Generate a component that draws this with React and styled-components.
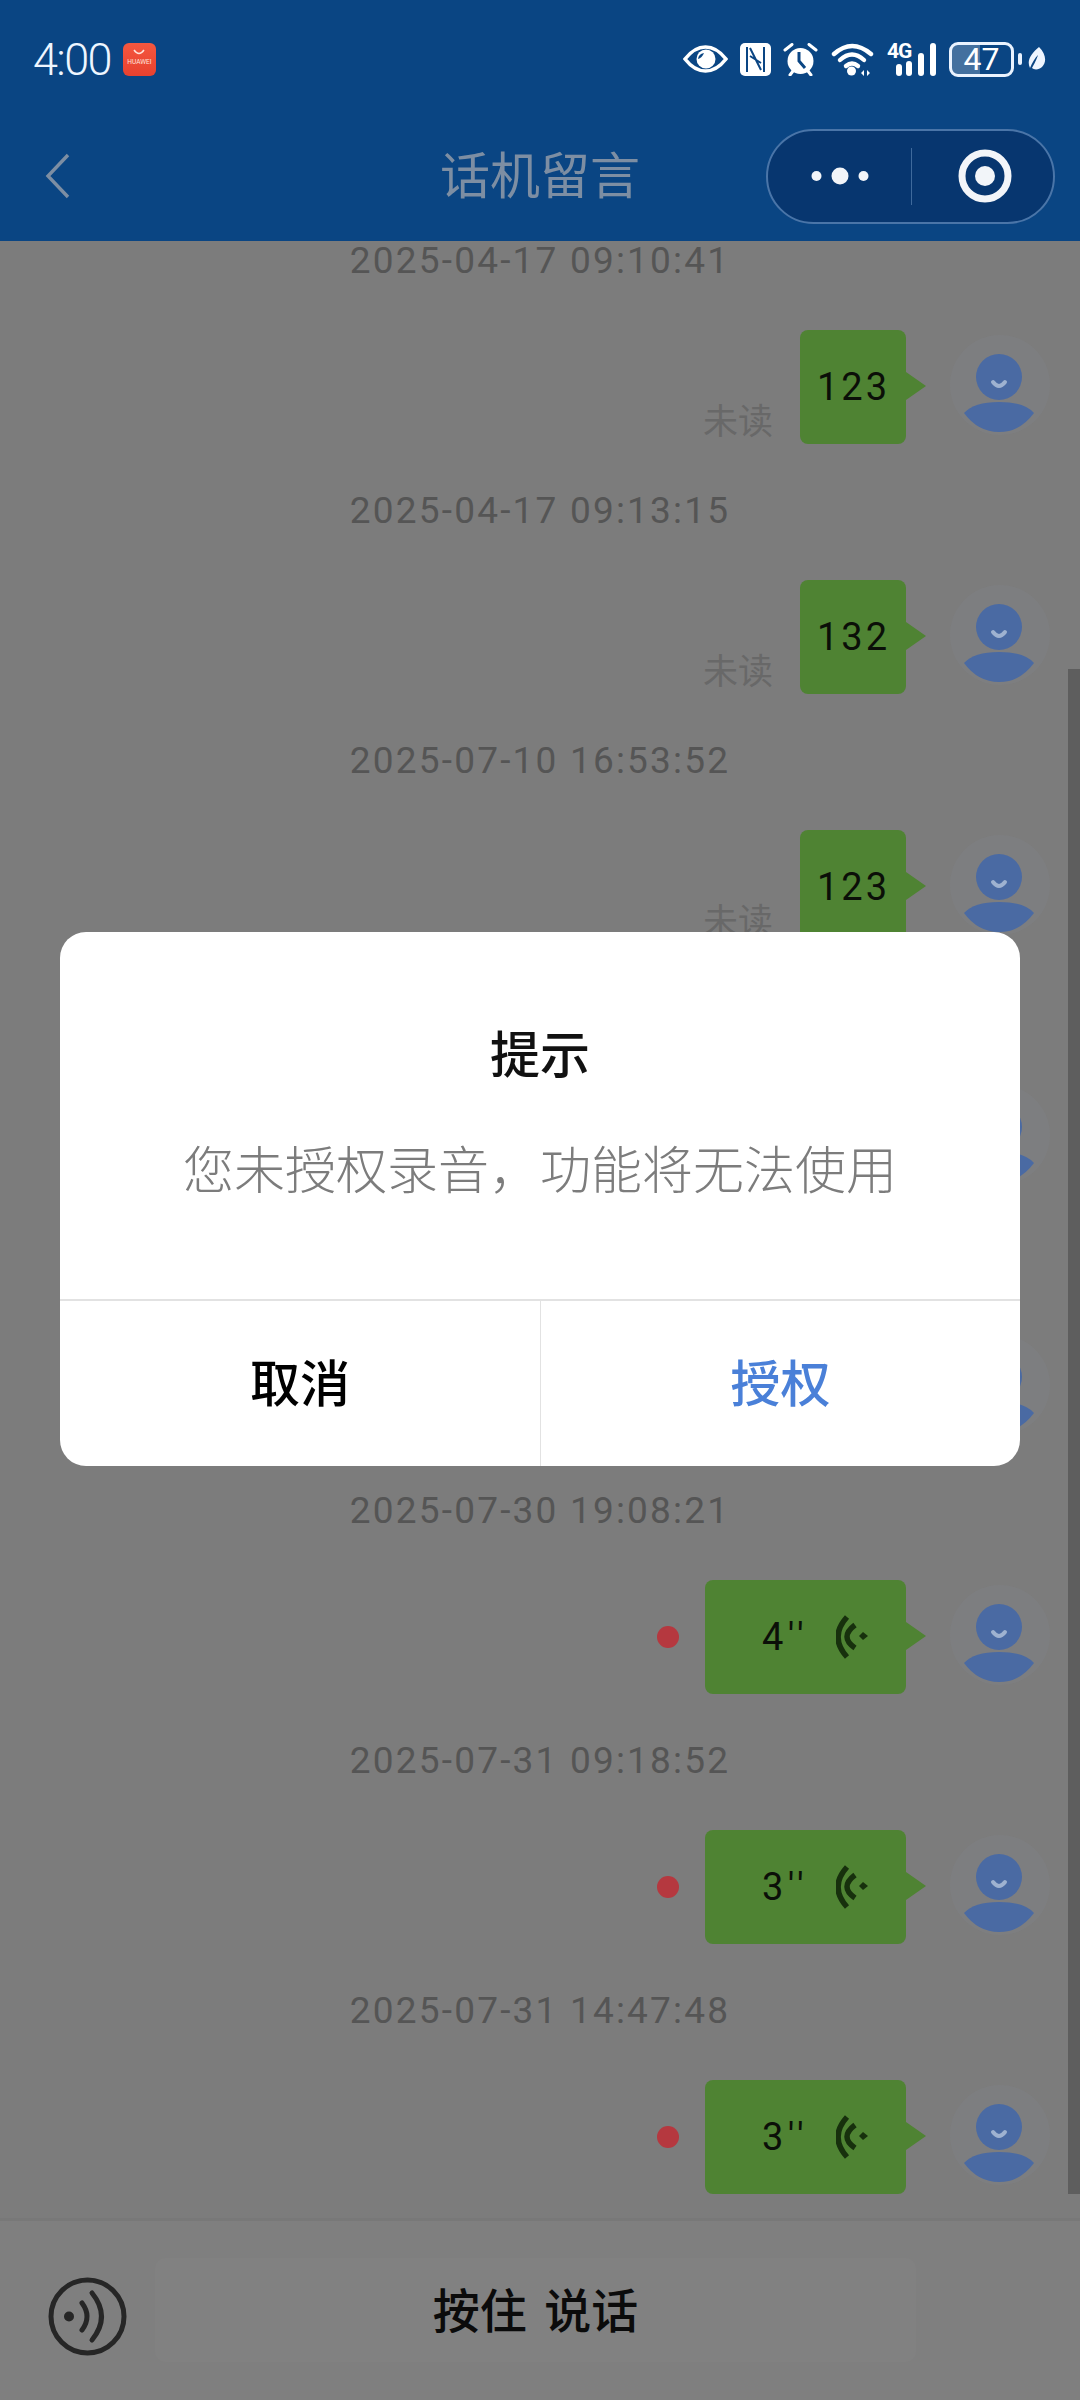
import React from "react";
import styled, { createGlobalStyle } from "styled-components";

const GlobalStyle = createGlobalStyle`
  html, body {
    margin: 0;
    padding: 0;
    background: #7c7c7c;
  }
  * {
    box-sizing: border-box;
  }
`;

const FONT = `Roboto, "Noto Sans CJK SC", sans-serif`;

const Page = styled.div`
  position: relative;
  width: 1080px;
  height: 2400px;
  display: flex;
  flex-direction: column;
  overflow: hidden;
  background: #7c7c7c;
  font-family: ${FONT};
`;

const Header = styled.header`
  flex: none;
  height: 241px;
  background: #0a4583;
`;

const StatusBar = styled.div`
  height: 118px;
  display: flex;
  align-items: center;
  padding: 0 34px 0 33px;
`;

const Clock = styled.span`
  font-size: 45px;
  font-weight: 300;
  letter-spacing: -1.6px;
  color: #eef6ff;
  line-height: 1;
  margin-right: 12px;
`;

const AppBadge = styled.div`
  width: 33px;
  height: 33px;
  border-radius: 6px;
  background: linear-gradient(180deg, #f4573f, #e8412f);
  display: flex;
  flex-direction: column;
  align-items: center;
  justify-content: flex-start;
  padding-top: 6px;
`;

const AppBadgeText = styled.span`
  font-size: 6.6px;
  line-height: 8px;
  margin-top: 3px;
  color: #ffe4dc;
`;

const StatusIcons = styled.div`
  margin-left: auto;
  display: flex;
  align-items: center;
`;

const Signal = styled.div`
  position: relative;
  width: 49px;
  height: 33px;
  margin-left: 12px;
`;

const NetLabel = styled.span`
  position: absolute;
  left: 0;
  top: -2px;
  font-size: 21px;
  line-height: 20px;
  font-weight: 700;
  color: #fff;
  letter-spacing: -1px;
`;

const Battery = styled.div`
  position: relative;
  width: 65px;
  height: 35px;
  margin-left: 13px;
  border: 3px solid #eaf3ff;
  border-radius: 9px;
  overflow: hidden;
  display: flex;
  align-items: center;
  justify-content: center;
  font-size: 32px;
  font-weight: 400;
  color: #fff;
  background: linear-gradient(90deg, #43709f 0 47%, transparent 47%);
`;

const BatteryNub = styled.div`
  width: 4px;
  height: 12px;
  margin-left: 4px;
  border-radius: 2px;
  background: #eaf3ff;
`;

const NavBar = styled.nav`
  height: 123px;
  padding: 0 25px 7px;
  display: grid;
  grid-template-columns: minmax(0, 1fr) auto minmax(0, 1fr);
  align-items: center;
`;

const BackIcon = styled.svg`
  margin-left: 20px;
`;

const NavTitle = styled.h1`
  margin: 2px 0 0;
  font-size: 50px;
  font-weight: 400;
  line-height: 60px;
  color: #7d8ea3;
`;

const Capsule = styled.div`
  justify-self: end;
  width: 289px;
  height: 95px;
  border: 2px solid #4a75a8;
  border-radius: 48px;
  background: #07366f;
  display: grid;
  grid-template-columns: 143px 1fr;
  align-items: center;
`;

const CapsuleCell = styled.div`
  height: 57px;
  display: flex;
  align-items: center;
  justify-content: center;
  padding-left: ${(p) => (p.$first ? "0" : "5px")};
  border-left: ${(p) => (p.$first ? "none" : "1px solid #3f6a9c")};
`;

const MessageList = styled.main`
  flex: 1;
  min-height: 0;
  overflow: hidden;
`;

const MessageItem = styled.section`
  height: 250px;
`;

const Timestamp = styled.div`
  height: 38px;
  line-height: 40px;
  text-align: center;
  font-size: 37px;
  letter-spacing: 2.2px;
  color: #555555;
`;

const MessageRow = styled.div`
  margin-top: 51px;
  height: 114px;
  padding-right: 30px;
  display: flex;
  justify-content: flex-end;
`;

const UnreadLabel = styled.span`
  align-self: flex-end;
  margin: 0 27px 3px 0;
  font-size: 35px;
  line-height: 36px;
  color: #686868;
`;

const RedDot = styled.span`
  align-self: center;
  width: 22px;
  height: 22px;
  margin-right: 26px;
  border-radius: 50%;
  background: #b5383f;
`;

const Bubble = styled.div`
  position: relative;
  width: ${(p) => (p.$voice ? "201px" : "106px")};
  height: 114px;
  margin-right: 44px;
  padding-left: ${(p) => (p.$voice ? "57px" : "17px")};
  border-radius: 8px;
  background: #4f8333;
  display: flex;
  align-items: center;
  font-size: 38px;
  letter-spacing: 3px;
  color: #0b0f08;

  &::after {
    content: "";
    position: absolute;
    left: 100%;
    top: 42px;
    border-left: 20px solid #4f8333;
    border-top: 14px solid transparent;
    border-bottom: 14px solid transparent;
  }
`;

const Duration = styled.span`
  width: 74px;
  flex: none;
  letter-spacing: 4.5px;
`;

const Avatar = styled.svg`
  flex: none;
  width: 100px;
  height: 114px;
`;

const Scrollbar = styled.div`
  position: absolute;
  right: 0;
  top: 669px;
  width: 12px;
  height: 1525px;
  background: #5e5e5e;
`;

const InputBar = styled.footer`
  flex: none;
  height: 182px;
  padding: 37px 164px 38px 48px;
  border-top: 3px solid #787878;
  background: #7f7f7f;
  display: flex;
  align-items: center;
`;

const VoiceToggle = styled.svg`
  flex: none;
  width: 79px;
  height: 79px;
  margin-top: 13px;
`;

const TalkButton = styled.div`
  flex: none;
  width: 761px;
  height: 104px;
  margin-left: 28px;
  padding-bottom: 6px;
  border-radius: 10px;
  background: #818181;
  display: flex;
  align-items: center;
  justify-content: center;
  font-size: 47px;
  font-weight: 500;
  word-spacing: 6px;
  color: #0b0b0b;
`;

const Scrim = styled.div`
  position: absolute;
  inset: 0;
  padding-bottom: 2px;
  display: flex;
  align-items: center;
  justify-content: center;
`;

const Dialog = styled.div`
  width: 960px;
  height: 534px;
  border-radius: 26px;
  background: #fff;
  overflow: hidden;
  display: flex;
  flex-direction: column;
`;

const DialogBody = styled.div`
  height: 367px;
  padding-top: 98px;
  text-align: center;
`;

const DialogTitle = styled.h2`
  margin: 0;
  font-size: 50px;
  line-height: 52px;
  font-weight: 500;
  color: #111;
`;

const DialogText = styled.p`
  margin: 60px 0 0;
  font-size: 51px;
  line-height: 60px;
  font-weight: 300;
  color: #7c7c7c;
`;

const DialogActions = styled.div`
  flex: 1;
  display: grid;
  grid-template-columns: 1fr 1fr;
  border-top: 2px solid #e2e2e2;
`;

const DialogButton = styled.div`
  display: flex;
  align-items: center;
  justify-content: center;
  padding-bottom: 7px;
  font-size: 50px;
  font-weight: 500;
  color: ${(p) => (p.$primary ? "#4a80d8" : "#000")};
  border-left: ${(p) => (p.$primary ? "1px solid #e2e2e2" : "none")};
`;

// rows 4 and 5 sit behind the dialog, only their avatars show at the edge
const messages = [
  { id: 1, time: "2025-04-17 09:10:41", text: "123" },
  { id: 2, time: "2025-04-17 09:13:15", text: "132" },
  { id: 3, time: "2025-07-10 16:53:52", text: "123" },
  { id: 4, hidden: true },
  { id: 5, hidden: true },
  { id: 6, time: "2025-07-30 19:08:21", seconds: 4 },
  { id: 7, time: "2025-07-31 09:18:52", seconds: 3 },
  { id: 8, time: "2025-07-31 14:47:48", seconds: 3 },
];

function UserAvatar() {
  return (
    <Avatar viewBox="0 0 100 114">
      <circle cx="50" cy="55" r="50" fill="#8a93a6" opacity="0.12" />
      <circle cx="49" cy="47" r="23" fill="#4a6aa3" />
      <path d="M43 52 Q49 60 55 52" fill="none" stroke="#9fb2d0" strokeWidth="4" strokeLinecap="round" />
      <path d="M14 83 Q24 72 49 72 Q74 72 84 83 Q70 102 49 102 Q28 102 14 83Z" fill="#4a6aa3" />
    </Avatar>
  );
}

function VoiceWaves() {
  return (
    <svg width="34" height="44" viewBox="0 0 34 44" fill="none" stroke="#17300d">
      <path d="M11 2 Q-7 22 11 42" strokeWidth="5.5" />
      <path d="M19 10 Q3 22 19 33" strokeWidth="5.5" />
      <path d="M23 21 L27 17 L32 21 L27 25 Z" fill="#17300d" stroke="none" />
    </svg>
  );
}

function EyeIcon() {
  return (
    <svg width="45" height="28" viewBox="0 0 45 28">
      <path d="M2 14 C9 5 15 2 22.5 2 C30 2 36 5 43 14 C36 23 30 26 22.5 26 C15 26 9 23 2 14Z" fill="none" stroke="#fff" strokeWidth="3.6" />
      <circle cx="23" cy="14" r="9.5" fill="#fff" />
      <path d="M15 14 Q15.5 9 21 8 Q19 13 15 14Z" fill="#0a4583" />
    </svg>
  );
}

function NfcIcon() {
  return (
    <svg width="31" height="33" viewBox="0 0 31 33" style={{ marginLeft: 12 }}>
      <rect width="31" height="33" rx="5" fill="#fff" />
      <path d="M7 29 V4 M24 29 V4" fill="none" stroke="#0a4583" strokeWidth="2" />
      <path d="M10 5 L21 27 M10 13 L21 20" fill="none" stroke="#0a4583" strokeWidth="2" />
    </svg>
  );
}

function AlarmIcon() {
  return (
    <svg width="35" height="33" viewBox="0 0 35 33" style={{ marginLeft: 12 }}>
      <circle cx="17.5" cy="18" r="13" fill="#fff" />
      <path d="M16 9 V18 L22 25" fill="none" stroke="#0a4583" strokeWidth="3" />
      <path d="M2 7 L9 1.5 M33 7 L26 1.5" stroke="#fff" strokeWidth="3" strokeLinecap="round" />
      <path d="M7 32 L10 28 M28 32 L25 28" stroke="#fff" strokeWidth="3" strokeLinecap="round" />
    </svg>
  );
}

function WifiIcon() {
  return (
    <svg width="44" height="33" viewBox="0 0 44 33" style={{ marginLeft: 13 }}>
      <g fill="none" stroke="#fff" strokeWidth="4.4" strokeLinecap="round">
        <path d="M3 11 Q21 -5 40 11" />
        <path d="M9 17 Q21 6 33 17" />
        <path d="M15 23 Q21 18 27 23" />
      </g>
      <circle cx="20.5" cy="28" r="4.5" fill="#fff" />
      <path d="M33 27 L30 30 L33 33Z M36 33 L39 30 L36 27Z" fill="#fff" />
    </svg>
  );
}

function SignalBars() {
  return (
    <svg width="49" height="33" viewBox="0 0 49 33">
      <g fill="#fff">
        <rect x="9" y="21" width="6" height="12" rx="3" />
        <rect x="19" y="18" width="6" height="15" rx="3" />
        <rect x="31" y="10" width="6" height="23" rx="3" />
        <rect x="43" y="0" width="6" height="33" rx="3" />
      </g>
    </svg>
  );
}

function LeafIcon() {
  return (
    <svg width="18" height="24" viewBox="0 0 18 24" style={{ marginLeft: 6 }}>
      <path d="M11 0 C18 7 19 15 14 20 C11 23 6 23 4 21 C8 14 9 11 10 8 C7 11 4 16 2 21 C-2 13 4 6 11 0Z" fill="#eef5ff" />
    </svg>
  );
}

function App() {
  return (
    <Page>
      <GlobalStyle />
      <Header>
        <StatusBar>
          <Clock>4:00</Clock>
          <AppBadge>
            <svg width="14" height="6" viewBox="0 0 14 6">
              <path d="M2 1 Q7 8 12 1" fill="none" stroke="#ffe4dc" strokeWidth="1.4" />
            </svg>
            <AppBadgeText>HUAWEI</AppBadgeText>
          </AppBadge>
          <StatusIcons>
            <EyeIcon />
            <NfcIcon />
            <AlarmIcon />
            <WifiIcon />
            <Signal>
              <SignalBars />
              <NetLabel>4G</NetLabel>
            </Signal>
            <Battery>47</Battery>
            <BatteryNub />
            <LeafIcon />
          </StatusIcons>
        </StatusBar>
        <NavBar>
          <BackIcon width="26" height="46" viewBox="0 0 26 46">
            <path d="M23 2 L3 23 L23 44" fill="none" stroke="#7d8ea3" strokeWidth="3.4" />
          </BackIcon>
          <NavTitle>话机留言</NavTitle>
          <Capsule>
            <CapsuleCell $first>
              <svg width="58" height="20" viewBox="0 0 58 20">
                <circle cx="5.5" cy="10" r="5" fill="#f2f5f9" />
                <circle cx="29" cy="10" r="8.5" fill="#f2f5f9" />
                <circle cx="52.5" cy="10" r="5" fill="#f2f5f9" />
              </svg>
            </CapsuleCell>
            <CapsuleCell>
              <svg width="54" height="54" viewBox="0 0 54 54">
                <circle cx="27" cy="27" r="23" fill="none" stroke="#f2f5f9" strokeWidth="7" />
                <circle cx="27" cy="27" r="10" fill="#f2f5f9" />
              </svg>
            </CapsuleCell>
          </Capsule>
        </NavBar>
      </Header>

      <MessageList>
        {messages.map((msg) => (
          <MessageItem key={msg.id}>
            <Timestamp>{msg.time}</Timestamp>
            <MessageRow>
              {msg.text && <UnreadLabel>未读</UnreadLabel>}
              {msg.seconds && <RedDot />}
              {msg.text && <Bubble>{msg.text}</Bubble>}
              {msg.seconds && (
                <Bubble $voice>
                  <Duration>{msg.seconds}''</Duration>
                  <VoiceWaves />
                </Bubble>
              )}
              <UserAvatar />
            </MessageRow>
          </MessageItem>
        ))}
      </MessageList>

      <InputBar>
        <VoiceToggle viewBox="0 0 79 79">
          <circle cx="39.5" cy="39.5" r="36.5" fill="none" stroke="#262626" strokeWidth="5" />
          <circle cx="21" cy="39.5" r="5" fill="#262626" />
          <path d="M34 26 Q44 39.5 34 53" fill="none" stroke="#262626" strokeWidth="5" strokeLinecap="round" />
          <path d="M44 16 Q63 39.5 44 63" fill="none" stroke="#262626" strokeWidth="5" strokeLinecap="round" />
        </VoiceToggle>
        <TalkButton>按住 说话</TalkButton>
      </InputBar>

      <Scrollbar />

      <Scrim>
        <Dialog>
          <DialogBody>
            <DialogTitle>提示</DialogTitle>
            <DialogText>您未授权录音，功能将无法使用</DialogText>
          </DialogBody>
          <DialogActions>
            <DialogButton>取消</DialogButton>
            <DialogButton $primary>授权</DialogButton>
          </DialogActions>
        </Dialog>
      </Scrim>
    </Page>
  );
}

export default App;
